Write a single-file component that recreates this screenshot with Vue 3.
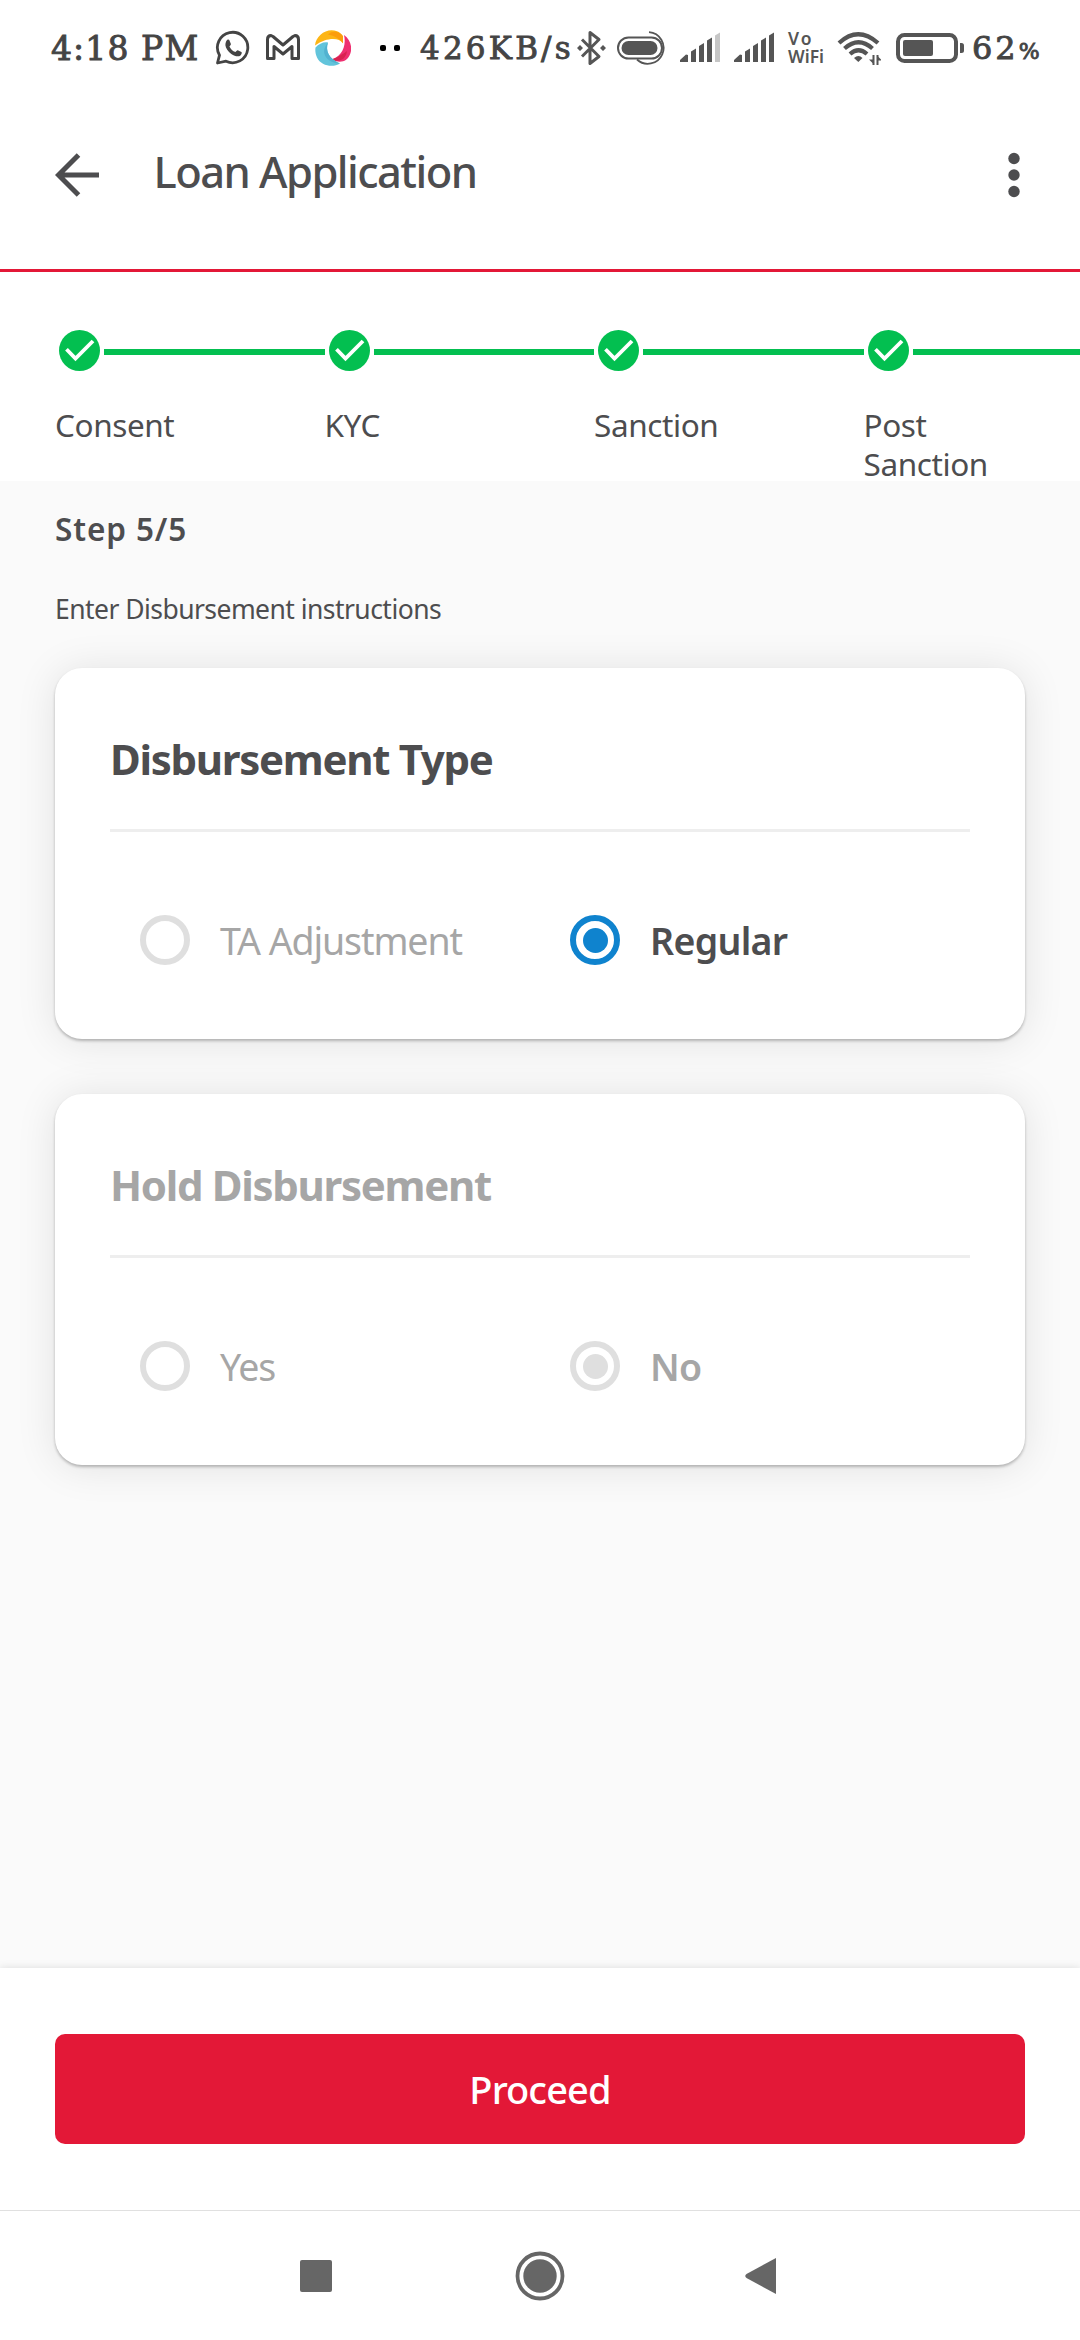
<script setup>
const steps = ['Consent', 'KYC', 'Sanction', 'Post Sanction']

const cards = [
  {
    title: 'Disbursement Type',
    disabled: false,
    options: [
      { label: 'TA Adjustment', checked: false },
      { label: 'Regular', checked: true },
    ],
  },
  {
    title: 'Hold Disbursement',
    disabled: true,
    options: [
      { label: 'Yes', checked: false },
      { label: 'No', checked: true },
    ],
  },
]
</script>

<template>
  <div class="screen">
    <div class="status">
      <span class="clock">4:18 PM</span>
      <svg class="whatsapp" width="36" height="36" viewBox="0 0 36 36">
        <path d="M2.500 33 4.500 25.200A15.200 15.200 0 1 1 11 31.200Z" fill="none" stroke="#444" stroke-width="2.800" stroke-linejoin="round" />
        <path d="M12.400 9.800c.9-.5 1.700-.2 2 .5l1.500 3.600c.2.6-.9 1.900-1.500 2.600 1.300 2.700 3.300 4.500 6 5.600.8-.8 1.600-2 2.400-1.800l3.600 1.700c.8.500.2 2.500-.9 3.400-2.200 1.700-5.700.9-9.200-1.500-3.300-2.400-5.600-5.800-5.900-8.700-.1-2.400 1-4.700 2-5.400Z" fill="#444" />
      </svg>
      <svg class="gmail" width="36" height="36" viewBox="0 0 36 36">
        <path d="M2.500 28.500V9.500Q2.500 5.500 6 5.500L8 6.500 18 15 28 6.500 30 5.500Q33.500 5.500 33.500 9.500V28.500H27V16.500L18 24 9 16.500V28.500Z" fill="none" stroke="#444" stroke-width="3" stroke-linejoin="round" />
      </svg>
      <svg class="pinwheel" width="36" height="36" viewBox="0 0 36 36">
        <path d="M0 15.500C1 5 12-2.500 22 1.200c4 1.500 6.500 4.500 6 12C24 7.500 12 7 0 15.500Z" fill="#fdb515" />
        <path d="M13 4.500C19-1 26 3 28 6v7.200C24 8 18 5.500 13 4.500Z" fill="#fb9d0c" />
        <path d="M29 5c7 5 9 14 5.500 20.500C32 31 26 34 16 29.500 25 27.500 32 18 29 5Z" fill="#ee3070" />
        <path d="M32 21C31 29 25 33 16 29.500 22 28 28 24 32 21Z" fill="#d82350" />
        <path d="M.5 17.500C4 13.500 9 11.500 13 12.500 10 21 14 29 25 33.500 18 38 6 36 2 27.500.5 24 0 21 .5 17.500Z" fill="#62c4db" />
        <path d="M13 12.500C10 21 14 29 25 33.500 12 33 4 23 13 12.500Z" fill="#52b2d0" />
      </svg>
      <i class="dot first"></i><i class="dot"></i>
      <span class="speed">426KB/s</span>
      <svg class="bluetooth" width="32" height="36" viewBox="0 0 32 36">
        <path d="M7 9.500 24 26.500 15 33.500V2.500L24 9.500 7 26.500" fill="none" stroke="#555" stroke-width="3" stroke-linejoin="round" />
        <path d="M5 15l3 3-3 3-3-3ZM28 15l3 3-3 3-3-3Z" fill="#555" />
      </svg>
      <svg class="pill" width="50" height="36" viewBox="0 0 50 36">
        <path d="M32 2.200A15.800 15.800 0 1 1 20 29.500" fill="none" stroke="#555" stroke-width="1.800" />
        <rect x="1" y="7.500" width="44" height="21" rx="10.500" fill="#fff" stroke="#555" stroke-width="2" />
        <rect x="4.500" y="11" width="36" height="14" rx="7" fill="#555" />
      </svg>
      <svg v-for="n in 2" :key="n" :class="'signal s' + n" width="40" height="36" viewBox="0 0 40 36" fill="#555">
        <path d="M0 32v-2l6-5.500 2 .5v7ZM11 32V21.500l5-3V32ZM19 32V16l5-3V32ZM27 32V10.500l5-3V32Z" />
        <path d="M35 32V5.500l5-3V32Z" :fill="n === 1 ? '#c6c6c6' : '#555'" />
      </svg>
      <span class="vowifi"><b>Vo</b>WiFi</span>
      <svg class="wifi" width="44" height="36" viewBox="0 0 44 36">
        <g fill="none" stroke="#555" stroke-width="4.200">
          <path d="M2 13Q21-4.500 41 13" />
          <path d="M7.500 18.500Q21.500 6 35.500 18.500" />
          <path d="M13 24Q21.500 16.500 30 24" />
        </g>
        <path d="M17 28q4.500-4 8.500 0L21.300 32Z" fill="#555" />
        <path d="M36.500 25v10M40.500 35V25" stroke="#555" stroke-width="2" />
        <path d="M32 29.500h5v5ZM40 25.500v5h5Z" fill="#555" />
      </svg>
      <svg class="battery" width="70" height="30" viewBox="0 0 70 30">
        <rect x="2" y="2" width="58" height="26" rx="6.500" fill="none" stroke="#555" stroke-width="4" />
        <rect x="7" y="7" width="30" height="16" rx="2" fill="#555" />
        <path d="M64 10h1.500q2.500 0 2.500 2.500v5q0 2.500-2.500 2.500H64Z" fill="#555" />
      </svg>
      <span class="percent">62<small>%</small></span>
    </div>

    <header class="header">
      <svg width="44" height="44" viewBox="0 0 44 44">
        <path d="M44 22H4M23.500 2 3.500 22l20 20" fill="none" stroke="#4d4d4f" stroke-width="5" />
      </svg>
      <h1>Loan Application</h1>
      <svg class="more" width="12" height="46" viewBox="0 0 12 46" fill="#4d4d4f">
        <circle cx="6" cy="6.500" r="5.700" /><circle cx="6" cy="23" r="5.700" /><circle cx="6" cy="39.500" r="5.700" />
      </svg>
    </header>

    <nav class="stepper">
      <div v-for="step in steps" :key="step" class="step">
        <div class="track">
          <svg width="41" height="41" viewBox="0 0 41 41">
            <circle cx="20.500" cy="20.500" r="20.500" fill="#03bf50" />
            <path d="M7.500 19.200 16.500 28.500 34 11" fill="none" stroke="#fff" stroke-width="3.800" />
          </svg>
          <i></i>
        </div>
        <div class="step-label">{{ step }}</div>
      </div>
    </nav>

    <main class="content">
      <h2>Step 5/5</h2>
      <p>Enter Disbursement instructions</p>
      <section v-for="card in cards" :key="card.title" class="card" :class="{ disabled: card.disabled }">
        <h3>{{ card.title }}</h3>
        <hr>
        <div class="options">
          <div v-for="option in card.options" :key="option.label" class="option" :class="{ checked: option.checked }">
            <span class="radio"></span>
            <span class="option-label">{{ option.label }}</span>
          </div>
        </div>
      </section>
    </main>

    <footer class="actions">
      <button>Proceed</button>
    </footer>

    <div class="system-nav">
      <svg width="32" height="32" viewBox="0 0 32 32"><rect width="32" height="32" rx="2" fill="#666" /></svg>
      <svg width="50" height="50" viewBox="0 0 50 50">
        <circle cx="25" cy="25" r="22.500" fill="none" stroke="#666" stroke-width="3.800" />
        <circle cx="25" cy="25" r="16.700" fill="#666" />
      </svg>
      <svg width="32" height="38" viewBox="0 0 32 38"><path d="M31 1v36L1.500 21q-2.500-2 0-4Z" fill="#666" /></svg>
    </div>
  </div>
</template>

<style>
body {
  margin: 0;
  background: #fff;
}
</style>

<style scoped>
.screen {
  width: 1080px;
  height: 2340px;
  display: flex;
  flex-direction: column;
  overflow: hidden;
  background: #fff;
  color: #4d4d4f;
  font-family: "Noto Sans", sans-serif;
}
.screen svg {
  display: block;
  flex: none;
}
h1, h2, h3, p, hr {
  margin: 0;
  border: 0;
}

.status {
  height: 96px;
  display: flex;
  align-items: center;
  padding-left: 51px;
  color: #444;
  font-family: "DejaVu Serif", serif;
  white-space: nowrap;
}
.clock, .speed, .percent {
  flex: none;
  -webkit-text-stroke: 0.9px #444;
}
.clock {
  width: 150px;
  font-size: 33px;
  letter-spacing: 1.1px;
}
.whatsapp { margin-left: 14px; }
.gmail { margin-left: 14px; }
.pinwheel { margin-left: 14px; }
.dot {
  flex: none;
  width: 6px;
  height: 6px;
  margin-right: 8px;
  border-radius: 2px;
  background: #000;
}
.dot.first { margin-left: 29px; }
.speed {
  width: 156px;
  margin-left: 12px;
  font-size: 31px;
  letter-spacing: 3.2px;
}
.bluetooth { margin-left: -1px; }
.pill { margin-left: 10px; }
.s1 { margin-left: 13px; }
.s2 { margin-left: 14px; }
.vowifi {
  width: 38px;
  margin: 0 0 1px 14px;
  color: #555;
  font: 600 17.500px/17.500px "Noto Sans", sans-serif;
}
.vowifi b {
  display: block;
  font-weight: 600;
  letter-spacing: 2px;
}
.wifi { margin-left: 11px; }
.battery { margin-left: 15px; }
.percent {
  margin-left: 6px;
  font-size: 32px;
  letter-spacing: 3px;
}
.percent small { font-size: 22px; }

.header {
  height: 157px;
  padding: 0 60px 16px 55px;
  border-bottom: 3px solid #e31837;
  display: flex;
  align-items: center;
}
.header h1 {
  margin-left: 54.500px;
  padding-bottom: 7px;
  font-size: 43.500px;
  line-height: 60px;
  font-weight: 500;
  letter-spacing: -1.550px;
}
.more { margin-left: auto; }

.stepper {
  height: 209px;
  box-sizing: border-box;
  padding: 58px 0 0 55px;
  display: flex;
  overflow: hidden;
}
.step {
  flex: none;
  width: 269.500px;
}
.track {
  display: flex;
  align-items: center;
  gap: 4px;
  padding-left: 4px;
}
.track i {
  flex: 1;
  height: 5.500px;
  margin-top: 3px;
  background: #03bf50;
}
.step-label {
  width: 150px;
  margin-top: 34px;
  font-size: 31.500px;
  line-height: 39px;
  letter-spacing: -0.4px;
}

.content {
  height: 1487px;
  box-sizing: border-box;
  padding: 28px 55px 0;
  background: #fafafa;
}
.content h2 {
  font-size: 31.500px;
  line-height: 40px;
  font-weight: 600;
  letter-spacing: 0.9px;
}
.content p {
  margin: 42px 0 41px;
  font-size: 26.500px;
  line-height: 36px;
  letter-spacing: -0.550px;
}
.card {
  height: 371px;
  box-sizing: border-box;
  padding: 61px 55px 0;
  margin-bottom: 55px;
  border-radius: 27px;
  background: #fff;
  box-shadow: 0 2px 3px rgba(0, 0, 0, 0.25), 0 2px 40px rgba(0, 0, 0, 0.1);
}
.card h3 {
  font-size: 42px;
  line-height: 60px;
  font-weight: 700;
  letter-spacing: -1.3px;
}
.card hr {
  height: 3px;
  margin-top: 40px;
  background: #eee;
}
.options {
  display: flex;
  margin-top: 83px;
  padding-left: 30px;
}
.option {
  flex: none;
  width: 430px;
  height: 50px;
  display: flex;
  align-items: center;
  gap: 30px;
  color: #a6a6a6;
  font-size: 37.500px;
  letter-spacing: -1.1px;
}
.option-label { padding-top: 1px; }
.radio {
  width: 50px;
  height: 50px;
  box-sizing: border-box;
  border: 6px solid #dfdfdf;
  border-radius: 50%;
  display: grid;
  place-items: center;
}
.checked {
  color: #4d4d4f;
  font-weight: 600;
  letter-spacing: -0.7px;
}
.checked .radio { border-color: #0f83ce; }
.checked .radio::after {
  content: "";
  width: 25px;
  height: 25px;
  border-radius: 50%;
  background: #0f83ce;
}
.disabled, .disabled .checked { color: #a6a6a6; }
.disabled .radio { border-color: #dfdfdf; }
.disabled .radio::after { background: #dfdfdf; }

.actions {
  height: 242px;
  box-sizing: border-box;
  padding: 66px 55px 0;
  background: #fff;
  box-shadow: 0 0 8px rgba(0, 0, 0, 0.12);
}
.actions button {
  display: block;
  width: 970px;
  height: 110px;
  padding: 0 0 1px;
  border: 0;
  border-radius: 10px;
  background: #e31837;
  color: #fff;
  font: 500 38px "Noto Sans", sans-serif;
  letter-spacing: -0.9px;
}

.system-nav {
  height: 130px;
  box-sizing: border-box;
  border-top: 1px solid #e0e0e0;
  background: #fff;
  display: flex;
  align-items: center;
  padding-left: 300px;
}
.system-nav svg:nth-child(2) { margin: 0 180px 0 182.500px; }
</style>
